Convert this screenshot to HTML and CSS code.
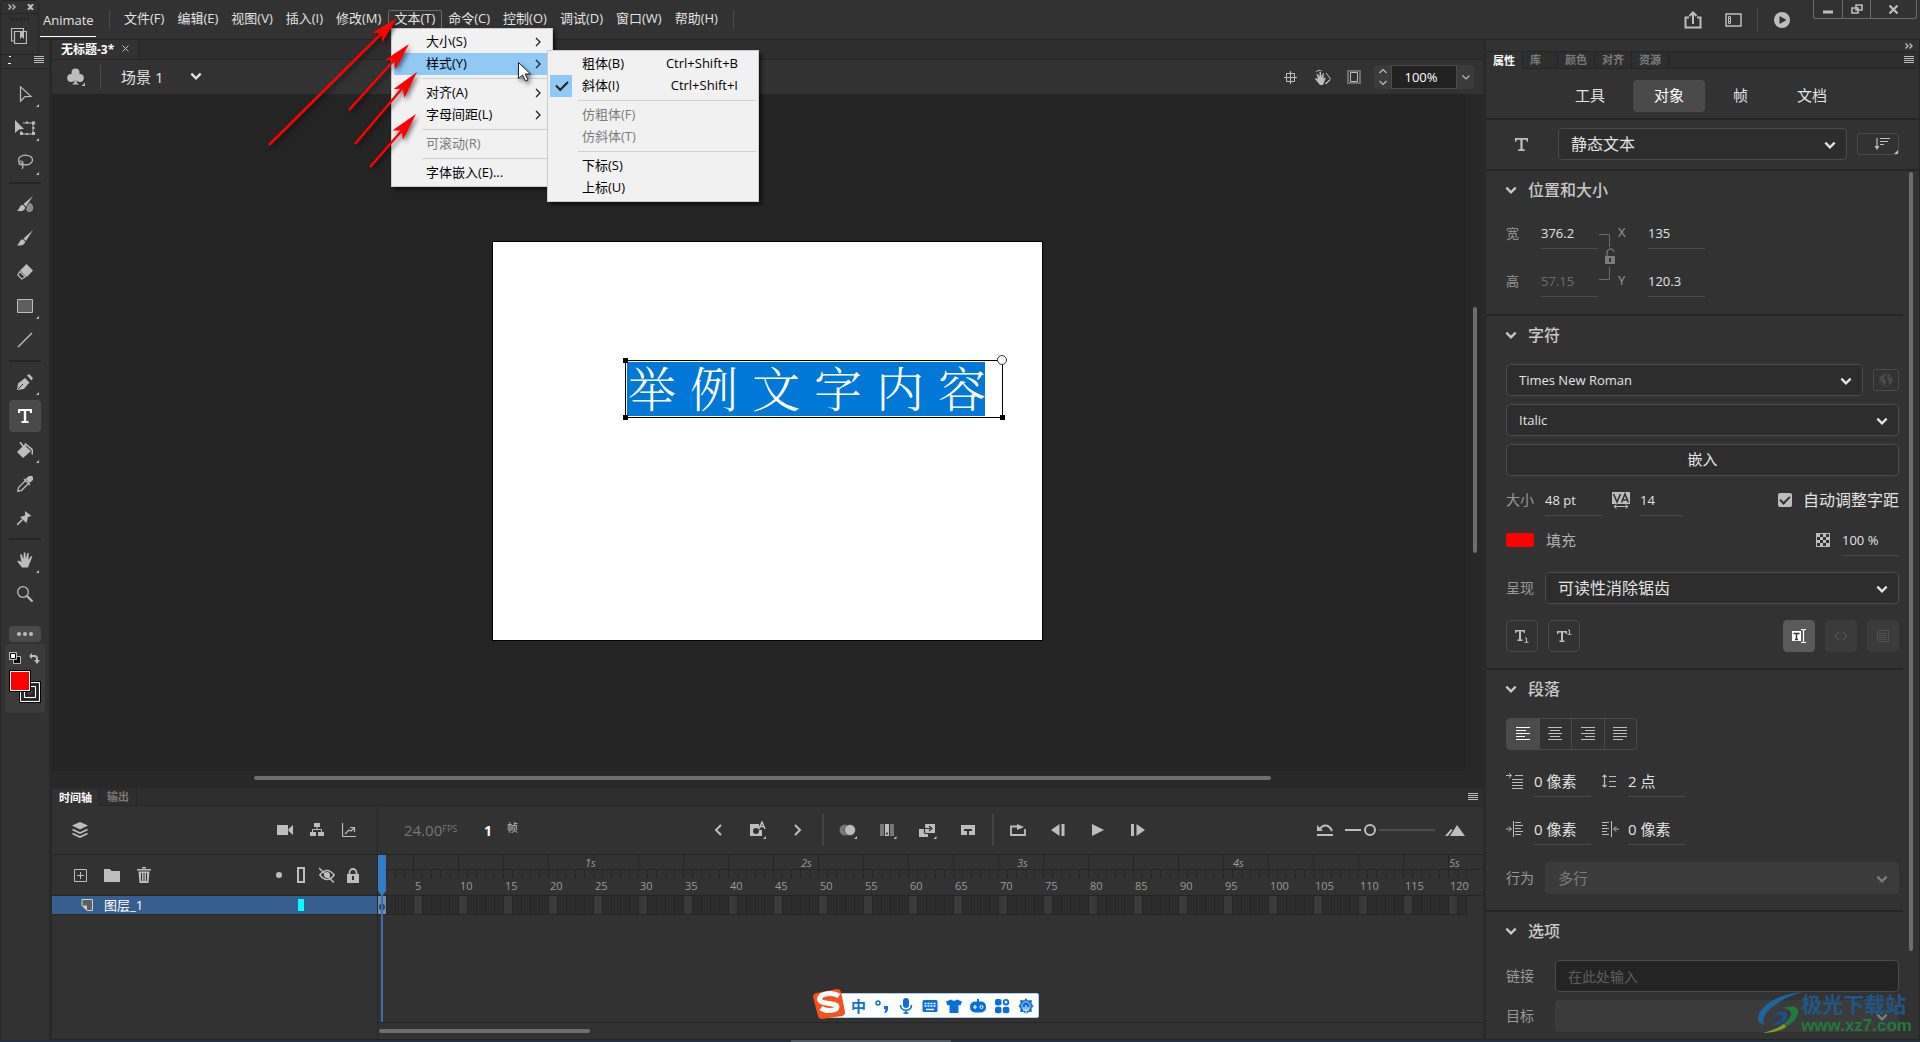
FILE: index.html
```html
<!DOCTYPE html>
<html lang="zh-CN">
<head>
<meta charset="utf-8">
<title>Animate</title>
<link rel="stylesheet" href="styles.css">
</head>
<body>
<svg class="defs" aria-hidden="true">
  <symbol id="chev" viewBox="0 0 12 12"><path d="M2 4l4 4 4-4" fill="none" stroke="currentColor" stroke-width="2"/></symbol>
  <symbol id="burger" viewBox="0 0 10 8"><path d="M0 .5h10M0 2.5h10M0 4.5h10M0 6.5h10" stroke="currentColor" fill="none"/></symbol>
  <symbol id="arrow-head" viewBox="0 0 8 12"><path d="M2 2l4 4-4 4" fill="none" stroke="#222" stroke-width="1.3"/></symbol>
  <symbol id="corner" viewBox="0 0 4 4"><path d="M4 0v4H0z" fill="currentColor"/></symbol>
</svg>

<div class="app">
  <header class="topbar">
    <div class="brand">Animate</div>
    <nav class="menubar" aria-label="主菜单">
      <button>文件(F)</button><button>编辑(E)</button><button>视图(V)</button><button>插入(I)</button><button>修改(M)</button><button class="open">文本(T)</button><button>命令(C)</button><button>控制(O)</button><button>调试(D)</button><button>窗口(W)</button><button>帮助(H)</button>
    </nav>
    <div class="top-actions">
      <button aria-label="共享"><svg width="18" height="18" viewBox="0 0 18 18"><path d="M5 6.500H1.500v10h15v-10H13M9 13V2M5.500 5L9 1.500 12.500 5" fill="none" stroke="currentColor" stroke-width="2"/></svg></button>
      <button aria-label="工作区"><svg width="17" height="14" viewBox="0 0 17 14"><path d="M1 1h15v12H1z" fill="none" stroke="currentColor" stroke-width="1.500"/><path d="M3.500 3.500h2v7h-2z" fill="none" stroke="currentColor"/><path d="M3 5.500h3M3 8.500h3" stroke="currentColor"/></svg></button>
      <i class="bar"></i>
      <button aria-label="测试影片"><svg width="16" height="16" viewBox="0 0 16 16"><circle cx="8" cy="8" r="8" fill="currentColor"/><path d="M5.500 4l7 4-7 4z" fill="#323232"/></svg></button>
    </div>
    <div class="window-buttons">
      <button aria-label="最小化"><svg width="10" height="10" viewBox="0 0 10 10"><path d="M0 8h10" stroke="currentColor" stroke-width="3"/></svg></button>
      <button aria-label="还原"><svg width="12" height="10" viewBox="0 0 12 10"><path d="M5 1h6v5H5z M1 4h6v5H1z" fill="none" stroke="currentColor" stroke-width="1.600"/></svg></button>
      <button aria-label="关闭"><svg width="11" height="9" viewBox="0 0 11 9"><path d="M1.500 .5l8 8M9.500 .5l-8 8" stroke="currentColor" stroke-width="2.200"/></svg></button>
    </div>
  </header>

  <div class="body">
    <aside class="toolbar">
      <div class="toolbar-head"><svg width="3" height="8" viewBox="0 0 3 8"><path d="M1 .5h2M0 7.500h3" stroke="#fff"/></svg><svg width="10" height="8"><use href="#burger"/></svg></div>
      <div class="tools">
        <button aria-label="选择"><svg class="ic" viewBox="0 0 16 16"><path d="M3.500 .8v14.400L8 10.600l6-.2z" fill="none" stroke="currentColor" stroke-width="1.200"/></svg><svg class="cn"><use href="#corner"/></svg></button>
        <button aria-label="任意变形"><svg class="ic wide" viewBox="0 0 20 16"><path d="M0 0v13l4-3.500L9 9z" fill="currentColor"/><path d="M8 3h10v11H6v-3" fill="none" stroke="currentColor"/><path d="M17 1.500h3v3h-3zM17 12h3v3h-3zM5 12h3v3H5zM11 1.500h2v2h-2zM11 13h2v2h-2zM17.500 7h2v2h-2z" fill="currentColor"/></svg><svg class="cn"><use href="#corner"/></svg></button>
        <button aria-label="套索"><svg class="ic" viewBox="0 0 16 16"><ellipse cx="8.500" cy="6" rx="7" ry="4.800" fill="none" stroke="currentColor" stroke-width="1.200"/><circle cx="4" cy="9" r="2" fill="#323232" stroke="currentColor" stroke-width="1.200"/><path d="M3 9c3 0 4 3 2 6" fill="none" stroke="currentColor" stroke-width="1.200"/></svg><svg class="cn"><use href="#corner"/></svg></button>
        <hr>
        <button aria-label="流畅画笔"><svg class="ic" viewBox="0 0 16 16"><path d="M16 0L6.500 8l2.500 2.500zM5.800 8.800c-3 0-3 4-5.800 6 4 1 8 0 8.300-3.600z" fill="currentColor"/><path d="M13 7c3 2.500 4 5 2 7.500-2 2-5 1-5.500-1 .7-1 1-2 .8-3z" fill="#8a8a8a" stroke="currentColor" stroke-width=".6"/></svg></button>
        <button aria-label="画笔"><svg class="ic" viewBox="0 0 16 16"><path d="M16 0L6.500 8.500 9 11zM5.800 9.200c-3 0-3 4-5.800 6 4 1 8 0 8.300-3.600z" fill="currentColor"/></svg></button>
        <button aria-label="橡皮擦"><svg class="ic" viewBox="0 0 16 16"><path d="M9.500 0L16 6.500 9.800 13 3 6.500z" fill="currentColor"/><path d="M2.700 7.600L.8 10.800l4 4.200 3.500-2z" fill="none" stroke="currentColor" stroke-width="1.200"/></svg></button>
        <button aria-label="矩形"><svg class="ic" viewBox="0 0 16 16"><path d="M.5 1.500h15v13H.5z" fill="#5e5e5e" stroke="currentColor"/></svg><svg class="cn"><use href="#corner"/></svg></button>
        <button aria-label="线条"><svg class="ic" viewBox="0 0 16 16"><path d="M1 15L15 1" stroke="currentColor" stroke-width="1.500"/></svg></button>
        <hr>
        <button aria-label="钢笔"><svg class="ic" viewBox="0 0 16 16"><path d="M0 16l1-6.500L8 4l4.500 4.500L6.800 15z" fill="currentColor"/><path d="M1 15l5-5" stroke="#323232"/><path d="M10 1.500l2-1.500 4 4-1.500 2.500z" fill="currentColor"/></svg><svg class="cn"><use href="#corner"/></svg></button>
        <button class="active" aria-label="文本"><svg class="ic" viewBox="0 0 16 16"><path d="M1 1h14v4h-2.200V3H9.200v10h2.300v2h-7v-2h2.300V3H3.200v2H1z" fill="currentColor"/></svg></button>
        <button aria-label="颜料桶"><svg class="ic" viewBox="0 0 16 16"><path d="M7 3l7 6-8 7-6-6z" fill="currentColor"/><path d="M3 0l3 4 3 1M7.500 4l1-2 5.500 4.500c2 1 1.500 4 1 6" fill="none" stroke="currentColor" stroke-width="1.600"/></svg><svg class="cn"><use href="#corner"/></svg></button>
        <button aria-label="滴管"><svg class="ic" viewBox="0 0 16 16"><path d="M12 0h3l1 1v3l-3.500 3-4-4z" fill="currentColor"/><path d="M9 4L1.500 11.500 .8 15.300l3.800-1L12 7" fill="none" stroke="currentColor" stroke-width="1.300"/><path d="M7 3l6 6" stroke="currentColor" stroke-width="1.500"/></svg></button>
        <button aria-label="资源变形"><svg class="ic" viewBox="0 0 16 16"><path d="M8 1l6.500 5-3.500 1-1.500 6-6.500-6 5-1.500z" fill="currentColor"/><path d="M5.500 9.500L0 15" stroke="currentColor" stroke-width="1.600"/></svg></button>
        <hr>
        <button aria-label="手形"><svg class="ic" viewBox="0 0 16 16"><path d="M5 15.500L.3 9.500l1.500-1L4.500 10 3 2.500l1.600-.3 1.800 5L6.800.5h1.600l.4 6.500 1.600-6 1.500.3-.6 6.700 2.700-4 1.300.8-2.800 6.700-1.500 4z" fill="currentColor"/></svg><svg class="cn"><use href="#corner"/></svg></button>
        <button aria-label="缩放"><svg class="ic" viewBox="0 0 16 16"><circle cx="6" cy="6" r="5.300" fill="none" stroke="currentColor" stroke-width="1.300"/><path d="M10 10l5.500 5.500" stroke="currentColor" stroke-width="2.200"/></svg></button>
      </div>
      <button class="more" aria-label="编辑工具栏"><svg width="16" height="4" viewBox="0 0 16 4"><circle cx="2" cy="2" r="2"/><circle cx="8" cy="2" r="2"/><circle cx="14" cy="2" r="2"/></svg></button>
      <div class="colors"><svg width="32" height="52" viewBox="0 0 32 52">
        <path d="M4.500 4.500h7v7h-7z" fill="#000" stroke="#bdbdbd"/><path d="M.5 .5h7v7h-7z" fill="#fff" stroke="#bdbdbd"/><path d="M1.500 1.500h5v5h-5z" fill="#fff" stroke="#000"/>
        <path d="M22 4h3.500q2.500 0 2.500 3v2" fill="none" stroke="#bdbdbd" stroke-width="2"/><path d="M23 1v6l-3-3zM25 8h6l-3 4z" fill="#bdbdbd"/>
        <path d="M11.500 30.500h19v19h-19z" fill="#3b3b3b" stroke="#fff"/><path d="M15.500 34.500h11v11h-11z" fill="none" stroke="#fff"/><path d="M13.500 32.500h15v15h-15zM17.500 36.500h7v7h-7z" fill="none" stroke="#222" stroke-width="2"/><path d="M10.500 29.500h21v21h-21z" fill="none" stroke="#000"/>
        <path d="M.5 18.500h21v21h-21z" fill="#f00" stroke="#000"/><path d="M1.500 19.500h19v19h-19z" fill="#f00" stroke="#fff"/></svg></div>
    </aside>

    <main class="center">
      <div class="doc-tabs"><button class="doc-tab">无标题-3*<svg width="7" height="7" viewBox="0 0 7 7"><path d="M.5 .5l6 6M6.500 .5l-6 6" stroke="#bdbdbd"/></svg></button></div>
      <div class="scenebar">
        <button class="club" aria-label="编辑场景"><svg width="18" height="18" viewBox="0 0 18 18"><circle cx="8.500" cy="4.500" r="4"/><circle cx="4.200" cy="10" r="4"/><circle cx="12.800" cy="10" r="4"/><path d="M8 8h1l.7 6.500 2.300 2H5l2.300-2z"/><path d="M18 14.500V18h-3.500z"/></svg></button>
        <i class="bar"></i>
        <button class="scene">场景 1 <svg width="14" height="14"><use href="#chev"/></svg></button>
        <div class="scene-right">
          <button aria-label="舞台居中"><svg width="13" height="13" viewBox="0 0 13 13"><path d="M6.500 0v13M0 6.500h13M2.500 2.500h8v8h-8z" fill="none" stroke="currentColor"/></svg></button>
          <button aria-label="旋转"><svg width="17" height="17" viewBox="0 0 17 17"><path d="M6 16L1 10l1-1 2 1-1.500-5h1.300L5.500 8V3h1.400l.6 5L9 4l1 .4-.6 5 1.600-1 .8.600-2.800 7z" fill="currentColor"/><path d="M12 4l4.500 6-5.500 5M2 3c2-2 4-2 6-1M12 15l4-4" fill="none" stroke="currentColor"/></svg></button>
          <button aria-label="裁切舞台外内容"><svg width="14" height="14" viewBox="0 0 14 14"><path d="M1 1h12v12H1z" fill="none" stroke="#6e6e6e" stroke-width="2"/><path d="M3.500 2.500h7v9h-7z" fill="none" stroke="currentColor"/></svg></button>
          <div class="zoombox">
            <button aria-label="步进"><svg width="8" height="18" viewBox="0 0 8 18"><path d="M.5 5L4 1.500 7.500 5M.5 13L4 16.500 7.500 13" fill="none" stroke="currentColor" stroke-width="1.200"/></svg></button>
            <input type="text" value="100%" aria-label="缩放比例">
            <button aria-label="缩放列表"><svg width="8" height="5" viewBox="0 0 8 5"><path d="M.5 .5L4 4 7.500 .5" fill="none" stroke="currentColor" stroke-width="1.200"/></svg></button>
          </div>
        </div>
      </div>

      <div class="stage">
        <div class="canvas">
          <div class="textfield"><span>举例文字内容</span><i class="h tl"></i><i class="h bl"></i><i class="h br"></i><i class="ring"></i></div>
        </div>
        <div class="vtrack"><div class="vthumb"></div></div>
        <div class="htrack"><div class="hthumb"></div></div>
      </div>

      <section class="timeline">
        <div class="panel-tabs tl-tabs"><button class="on">时间轴</button><button>输出</button><svg class="burger" width="10" height="8"><use href="#burger"/></svg></div>
        <div class="tl-grid">
          <div class="tl-left">
            <div class="tl-row1">
              <button aria-label="图层视图"><svg width="16" height="16" viewBox="0 0 16 16"><path d="M8 0l8 3.500L8 7.500 0 3.500z" fill="currentColor"/><path d="M.5 7.500L8 11l7.500-3.500M.5 11.500L8 15l7.500-3.500" fill="none" stroke="currentColor" stroke-width="1.800"/></svg></button>
              <span class="push"></span>
              <button aria-label="摄像头"><svg width="16" height="12" viewBox="0 0 16 12"><path d="M0 1h11v10H0zM11.500 5L16 1v10l-4.500-4z" fill="currentColor"/></svg></button>
              <button aria-label="父级视图"><svg width="14" height="14" viewBox="0 0 14 14"><path d="M4 0h6v4H4zM0 9h6v4H0zM8 9h6v4H8z" fill="currentColor"/><path d="M7 4v3M2.500 9V6.500h9V9" fill="none" stroke="currentColor"/></svg></button>
              <button aria-label="图层深度"><svg width="14" height="14" viewBox="0 0 14 14"><path d="M.5 0v13.500H14M3 11l4-4 2 1 3-3M8 4.500h4.500V9" fill="none" stroke="currentColor" stroke-width="1.200"/></svg></button>
            </div>
            <div class="tl-row2">
              <button aria-label="新建图层"><svg width="13" height="13" viewBox="0 0 13 13"><path d="M.5 .5h12v12H.5zM6.500 3v7M3 6.500h7" fill="none" stroke="currentColor"/></svg></button>
              <button aria-label="新建文件夹"><svg width="16" height="13" viewBox="0 0 16 13"><path d="M0 0h6l1.500 2H16v11H0z" fill="currentColor"/></svg></button>
              <button aria-label="删除"><svg width="14" height="16" viewBox="0 0 14 16"><path d="M0 2h14v1.500H0zM5 0h4v1.500H5zM1.500 4.500h11L11.500 16h-9z" fill="currentColor"/><path d="M4.500 6v8M7 6v8M9.500 6v8" stroke="#323232"/></svg></button>
              <span class="push"></span>
              <button class="s dot" aria-label="突出显示"><svg width="6" height="6"><circle cx="3" cy="3" r="3" fill="currentColor"/></svg></button>
              <button class="s" aria-label="轮廓"><svg width="8" height="16" viewBox="0 0 8 16"><path d="M1 1h6v14H1z" fill="none" stroke="currentColor" stroke-width="2"/></svg></button>
              <button class="s eye" aria-label="隐藏"><svg width="16" height="16" viewBox="0 0 16 16"><path d="M.8 8Q8-1 15.200 8 8 17 .8 8z" fill="none" stroke="currentColor" stroke-width="1.500"/><circle cx="8" cy="8" r="3" fill="currentColor"/><path d="M0 1l15 14.500" stroke="currentColor" stroke-width="1.500"/></svg></button>
              <button class="s" aria-label="锁定"><svg width="12" height="15" viewBox="0 0 12 15"><path d="M2.500 7V4.500a3.500 3.500 0 017 0V7" fill="none" stroke="currentColor" stroke-width="1.800"/><path d="M0 6h12v9H0z" fill="currentColor"/><path d="M6 8v4" stroke="#323232" stroke-width="2"/></svg></button>
            </div>
            <div class="layer"><svg width="12" height="12" viewBox="0 0 12 12"><path d="M1 .5h10.500v11H6L1 6.500z" fill="#5e5e5e" stroke="#cfcfcf"/><path d="M1 6.500h5v5z" fill="#cfcfcf"/></svg><span>图层_1</span><i></i></div>
          </div>
          <div class="tl-right">
            <div class="transport">
              <div class="info"><span class="fps">24.00<sup>FPS</sup></span><b>1</b><span class="unit">帧</span></div>
              <button aria-label="上一关键帧"><svg width="8" height="12" viewBox="0 0 8 12"><path d="M7 1L2 6l5 5" fill="none" stroke="currentColor" stroke-width="2"/></svg></button>
              <button aria-label="自动关键帧"><svg width="16" height="18" viewBox="0 0 16 18"><path d="M0 3h9v6h3v6H0z" fill="currentColor"/><circle cx="6" cy="10" r="3" fill="#323232"/><path d="M9 8l3-7 3 7M10 5.500h4" fill="none" stroke="currentColor" stroke-width="1.500"/><path d="M16 15v3h-3z" fill="currentColor"/></svg></button>
              <button aria-label="下一关键帧"><svg width="8" height="12" viewBox="0 0 8 12"><path d="M1 1l5 5-5 5" fill="none" stroke="currentColor" stroke-width="2"/></svg></button>
              <i class="bar2"></i>
              <button aria-label="绘图纸外观"><svg width="18" height="18" viewBox="0 0 18 18"><circle cx="6" cy="9" r="5.500" fill="#777"/><circle cx="11" cy="9" r="5.500" fill="currentColor" stroke="#323232" stroke-width=".6"/><path d="M18 15v3h-3z" fill="currentColor"/></svg></button>
              <button aria-label="编辑多个帧"><svg width="18" height="18" viewBox="0 0 18 18"><path d="M1 3h4v12H1zM11 3h4v12h-4z" fill="#777"/><path d="M6 3h4v12H6z" fill="currentColor"/><circle cx="8" cy="12.500" r="1" fill="#222"/><path d="M17.500 15v3h-3z" fill="currentColor"/></svg></button>
              <button aria-label="插入帧"><svg width="18" height="18" viewBox="0 0 18 18"><path d="M0 8h9v8H0zM6 3h10v9H6z" fill="currentColor"/><path d="M5.500 7.500h7M10 5l3 2.500-3 2.500M5.500 12.500h5M5.500 3v9" fill="none" stroke="#323232" stroke-width="1.200"/><path d="M17.500 15v3h-3z" fill="currentColor"/></svg></button>
              <button aria-label="补间"><svg width="14" height="10" viewBox="0 0 14 10"><path d="M0 0h14v10H0z" fill="currentColor"/><path d="M3 5h8M7 5v5" stroke="#323232" stroke-width="2"/></svg></button>
              <i class="bar2"></i>
              <button aria-label="循环"><svg width="16" height="12" viewBox="0 0 16 12"><path d="M8 2.500H1v8.500h14V5" fill="none" stroke="currentColor" stroke-width="1.800"/><path d="M7 0l7 3-7 3z" fill="currentColor"/></svg></button>
              <button aria-label="后退一帧"><svg width="14" height="12" viewBox="0 0 14 12"><path d="M8.500 0v12L0 6zM10.500 0h3v12h-3z" fill="currentColor"/></svg></button>
              <button aria-label="播放"><svg width="12" height="12" viewBox="0 0 12 12"><path d="M0 0l12 6-12 6z" fill="currentColor"/></svg></button>
              <button aria-label="前进一帧"><svg width="14" height="12" viewBox="0 0 14 12"><path d="M0 0h3v12H0zM5.500 0L14 6l-8.500 6z" fill="currentColor"/></svg></button>
              <span class="push"></span>
              <button aria-label="重置时间轴缩放"><svg width="16" height="12" viewBox="0 0 16 12"><path d="M0 11h16" stroke="currentColor" stroke-width="2"/><path d="M3 5c3-5 9-5 12 2" fill="none" stroke="currentColor" stroke-width="2"/><path d="M0 1v6h6z" fill="currentColor"/></svg></button>
              <input type="range" min="0" max="100" value="24" aria-label="时间轴缩放">
              <button aria-label="放大"><svg width="20" height="11" viewBox="0 0 20 11"><path d="M0 11l6-7 1.500 1L3 11zM5 11l7-11 8 11z" fill="currentColor"/></svg></button>
            </div>
            <div class="ruler">
              <div class="seconds"><span>1s</span><span>2s</span><span>3s</span><span>4s</span><span>5s</span></div>
              <div class="ticks"></div>
              <div class="nums"><span>5</span><span>10</span><span>15</span><span>20</span><span>25</span><span>30</span><span>35</span><span>40</span><span>45</span><span>50</span><span>55</span><span>60</span><span>65</span><span>70</span><span>75</span><span>80</span><span>85</span><span>90</span><span>95</span><span>100</span><span>105</span><span>110</span><span>115</span><span>120</span></div>
            </div>
            <div class="frames"></div>
            <div class="playhead"><i class="head"></i><i class="stem"></i><i class="cell"></i></div>
            <div class="tl-scroll"><div></div></div>
          </div>
        </div>
      </section>
    </main>

    <aside class="props">
      <div class="collapse"><svg width="8" height="6" viewBox="0 0 8 6"><path d="M.5 .5L3 3 .5 5.500M4.500 .5L7 3 4.500 5.500" fill="none" stroke="currentColor" stroke-width="1.400"/></svg></div>
      <div class="panel-tabs"><button class="on">属性</button><button class="lib">库</button><button>颜色</button><button>对齐</button><button>资源</button><svg class="burger" width="10" height="8"><use href="#burger"/></svg></div>
      <div class="modes"><button>工具</button><button class="on">对象</button><button>帧</button><button>文档</button></div>
      <div class="kind">
        <svg width="15" height="15" viewBox="0 0 16 16"><path d="M1 1h14v4h-1.500L13 3H9.200v10h2.300v2h-7v-2h2.300V3H3L2.500 5H1z" fill="currentColor"/></svg>
        <div class="sel"><select aria-label="文本类型"><option>静态文本</option></select><svg><use href="#chev"/></svg></div>
        <button class="mini" aria-label="文本方向"><svg width="28" height="20" viewBox="0 0 28 20"><path d="M7 4v10M10 4.500h10M10 7.500h8M10 10.500h4" stroke="currentColor" stroke-width="1.200"/><path d="M4.500 12h5L7 16zM28 16v4h-4z" fill="currentColor"/></svg></button>
      </div>

      <div class="scroll">
        <div class="sections">
          <section>
            <h2><svg><use href="#chev"/></svg>位置和大小</h2>
            <div class="pos">
              <label for="w">宽</label><input id="w" type="text" value="376.2">
              <svg class="link" width="20" height="48" viewBox="0 0 20 48"><path d="M1 1.500h10.500V14M11.500 34v12.500H1" fill="none" stroke="#6b6b6b"/><path d="M9 23v-3a3.500 3.500 0 017-1" fill="none" stroke="#7c7c7c" stroke-width="1.200"/><path d="M7 23h10v8H7z" fill="#7c7c7c"/><path d="M12 25v4" stroke="#323232" stroke-width="2"/></svg>
              <label for="x">X</label><input id="x" type="text" value="135">
              <label for="hh">高</label><input id="hh" type="text" value="57.15" disabled>
              <label for="y">Y</label><input id="y" type="text" value="120.3">
            </div>
          </section>
          <section>
            <h2><svg><use href="#chev"/></svg>字符</h2>
            <div class="stack">
              <div class="row"><div class="sel"><select class="lat" aria-label="字体"><option>Times New Roman</option></select><svg><use href="#chev"/></svg></div>
                <button class="mini globe" aria-label="添加 Web 字体"><svg width="14" height="14" viewBox="0 0 14 14"><circle cx="7" cy="7" r="6.300" fill="none" stroke="#4b4b4b" stroke-width=".8"/><path d="M1 4.500L4 1.500l2.500.5-.5 2-2 1.500 3 1.500.5 2-2.500 3.500-1.500-3L1 7.500zM9 1l2.500 1.500L10 4l2.500 2 .8 1.500-2 4L9.500 10 10 8 8 6.500l.5-2L8 3z" fill="#4b4b4b"/></svg></button></div>
              <div class="sel"><select class="lat" aria-label="字体样式"><option>Italic</option></select><svg><use href="#chev"/></svg></div>
              <button class="wide-btn">嵌入</button>
            </div>
            <div class="row size">
              <label for="fs">大小</label><input id="fs" type="text" value="48 pt">
              <svg class="va" width="18" height="17" viewBox="0 0 18 17"><path d="M0 0h18v12H0z" fill="#bdbdbd"/><path d="M1.500 2L5 10 8.500 2M9.500 10.500L13 2l3.500 8.500M11 8h4" fill="none" stroke="#323232" stroke-width="1.600"/><path d="M2 14.500h14M4.500 12.500l-2.500 2 2.500 2M13.500 12.500l2.500 2-2.500 2" fill="none" stroke="#bdbdbd"/></svg>
              <input class="narrow" type="text" value="14" aria-label="字母间距">
              <label class="check"><input type="checkbox" checked>自动调整字距</label>
            </div>
            <div class="row fill">
              <button class="swatch" id="fc" aria-label="填充颜色"></button><label for="fc">填充</label>
              <i class="checker"></i><input type="text" value="100 %" aria-label="不透明度">
            </div>
            <div class="row field"><label for="rd">呈现</label><div class="sel"><select id="rd"><option>可读性消除锯齿</option></select><svg><use href="#chev"/></svg></div></div>
            <div class="row btns">
              <button class="sq" aria-label="切换下标"><svg width="16" height="16" viewBox="0 0 16 16"><path d="M1 2h10v3H9.800l-.3-1.500H7v8h1.500V13h-5v-1.500H5v-8H2.500L2.200 5H1z" fill="#bdbdbd"/><path d="M11 10h1.500v4M10.500 14.300h4" fill="none" stroke="#bdbdbd"/></svg></button>
              <button class="sq" aria-label="切换上标"><svg width="16" height="16" viewBox="0 0 16 16"><path d="M1 3h10v3H9.800l-.3-1.500H7v8h1.500V14h-5v-1.500H5v-8H2.500L2.200 6H1z" fill="#bdbdbd"/><path d="M12 2h1.500v4M11.500 6.300h4" fill="none" stroke="#bdbdbd"/></svg></button>
              <span class="push"></span>
              <button class="sq lit" aria-label="可选"><svg width="16" height="16" viewBox="0 0 16 16"><path d="M1 3h9v10H1z" fill="#fff"/><path d="M2.500 5.500h6M5.500 5.500v6M4 11.500h3" stroke="#333" stroke-width="1.400"/><path d="M10 1.500h1.500l1 1 1-1H15M12.500 2v12M10 14.500h5" fill="none" stroke="#fff" stroke-width="1.200"/></svg></button>
              <button class="sq off" disabled aria-label="呈现为 HTML"><svg width="14" height="10" viewBox="0 0 14 10"><path d="M5 1L1.500 5 5 9M9 1l3.500 4L9 9" fill="none" stroke="currentColor" stroke-width="1.400"/></svg></button>
              <button class="sq off" disabled aria-label="显示边框"><svg width="12" height="12" viewBox="0 0 12 12"><path d="M.5 .5h11v11H.5zM2 3.500h8M2 5.500h8M2 7.500h8M2 9.500h8" fill="none" stroke="currentColor"/></svg></button>
            </div>
          </section>
          <section>
            <h2><svg><use href="#chev"/></svg>段落</h2>
            <div class="align">
              <button class="on" aria-label="左对齐"><svg viewBox="0 0 14 14"><path d="M0 .5h14M0 3.500h10M0 6.500h14M0 9.500h9M0 12.500h14"/></svg></button>
              <button aria-label="居中"><svg viewBox="0 0 14 14"><path d="M0 .5h14M2 3.500h10M0 6.500h14M2 9.500h10M0 12.500h14"/></svg></button>
              <button aria-label="右对齐"><svg viewBox="0 0 14 14"><path d="M0 .5h14M4 3.500h10M0 6.500h14M4 9.500h10M0 12.500h14"/></svg></button>
              <button aria-label="两端对齐"><svg viewBox="0 0 14 14"><path d="M0 .5h14M0 3.500h14M0 6.500h14M0 9.500h14M0 12.500h10"/></svg></button>
            </div>
            <div class="para">
              <svg width="17" height="16" viewBox="0 0 17 16"><path d="M0 2.500h5M9 2.500h8M6 6.500h11M6 9.500h11M6 12.500h11M6 15.500h11M3 0l2.500 2.500L3 5" fill="none" stroke="currentColor"/></svg><input type="text" value="0 像素" aria-label="缩进">
              <svg width="14" height="14" viewBox="0 0 14 14"><path d="M2.500 1v12M.5 3l2-2 2 2M.5 11l2 2 2-2M7 2.500h7M7 7.500h7M7 12.500h7" fill="none" stroke="currentColor" stroke-width="1.200"/></svg><input type="text" value="2 点" aria-label="行距">
              <svg width="17" height="16" viewBox="0 0 17 16"><path d="M0 8h5M3 5.500L5.500 8 3 10.500M7.500 0v16M9 1.500h6M9 4.500h8M9 7.500h6M9 10.500h8M9 13.500h6" fill="none" stroke="currentColor"/></svg><input type="text" value="0 像素" aria-label="左边距">
              <svg width="17" height="16" viewBox="0 0 17 16"><path d="M17 8h-5M14 5.500L11.500 8l2.500 2.500M9.500 0v16M0 1.500h7M0 4.500h5M0 7.500h7M0 10.500h5M0 13.500h7" fill="none" stroke="currentColor"/></svg><input type="text" value="0 像素" aria-label="右边距">
            </div>
            <div class="row field beh"><label for="bh">行为</label><div class="sel off"><select id="bh" disabled><option>多行</option></select><svg><use href="#chev"/></svg></div></div>
          </section>
          <section>
            <h2><svg><use href="#chev"/></svg>选项</h2>
            <div class="stack opts">
              <div class="row field"><label for="lk">链接</label><input class="box" id="lk" type="text" placeholder="在此处输入"></div>
              <div class="row field"><label for="tg">目标</label><div class="sel off"><select id="tg" disabled><option></option></select><svg><use href="#chev"/></svg></div></div>
            </div>
          </section>
        </div>
        <div class="ptrack"><div></div></div>
      </div>
    </aside>
  </div>
  <footer class="taskbar"><i></i></footer>
</div>

<div class="dock">
  <div class="dock-head"><svg width="8" height="6" viewBox="0 0 8 6"><path d="M.5 .5L3 3 .5 5.500M4.500 .5L7 3 4.500 5.500" fill="none" stroke="#bdbdbd" stroke-width="1.400"/></svg><svg width="7" height="6" viewBox="0 0 7 6"><path d="M1 0l5 6M6 0L1 6" stroke="#bdbdbd" stroke-width="2"/></svg></div>
  <i class="grip"></i>
  <button aria-label="库"><svg width="16" height="16" viewBox="0 0 16 16"><path d="M3.500 3.500h12v12h-12zM3 13H.5V.5h12V3" fill="none" stroke="#bdbdbd" stroke-width="1.200"/><path d="M9 3h4v8l-2-2-2 2z" fill="#bdbdbd"/></svg></button>
</div>

<div class="menu m1" role="menu">
  <button>大小(S)<svg><use href="#arrow-head"/></svg></button>
  <button class="hot">样式(Y)<svg><use href="#arrow-head"/></svg></button>
  <hr>
  <button>对齐(A)<svg><use href="#arrow-head"/></svg></button>
  <button>字母间距(L)<svg><use href="#arrow-head"/></svg></button>
  <hr>
  <button disabled>可滚动(R)</button>
  <hr>
  <button>字体嵌入(E)...</button>
</div>
<div class="menu m2" role="menu">
  <button>粗体(B)<span>Ctrl+Shift+B</span></button>
  <button class="ticked">斜体(I)<span>Ctrl+Shift+I</span></button>
  <hr>
  <button disabled>仿粗体(F)</button>
  <button disabled>仿斜体(T)</button>
  <hr>
  <button>下标(S)</button>
  <button>上标(U)</button>
</div>

<svg class="marks" width="560" height="190" viewBox="0 0 560 190">
  <g stroke="#f00" stroke-width="2.500" fill="#f00">
    <path d="M269 145L382 33M349 110l48-53M355 144l50-59M370 167l35-40"/>
    <g stroke="none">
      <path d="M0 0l-28-7 6 7-6 7z" transform="translate(397 18) rotate(-45)"/>
      <path d="M0 0l-28-7 6 7-6 7z" transform="translate(409 44) rotate(-48)"/>
      <path d="M0 0l-28-7 6 7-6 7z" transform="translate(417 72) rotate(-50)"/>
      <path d="M0 0l-28-7 6 7-6 7z" transform="translate(416 114) rotate(-49)"/>
    </g>
  </g>
  <path class="cursor" d="M518.500 62.500v16l4-3.500 3 6 2.500-1-2.800-6h5.300z" fill="#fff" stroke="#222"/>
</svg>

<div class="ime">
  <svg class="sogou" width="32" height="30" viewBox="0 0 32 30"><path d="M3 4L24 0q3 0 4 3l4 20q0 3-3 4L9 30q-3 0-4-3L0 8q0-3 3-4z" fill="#f4511e"/><path d="M26 7C20 3 7 4 6.500 10c0 6 18 3 17.500 8-.5 4-11 5-16 1" fill="none" stroke="#fff" stroke-width="5"/></svg>
  <b>中</b>
  <svg viewBox="0 0 16 16"><circle cx="4" cy="5" r="2" fill="none" stroke="currentColor" stroke-width="1.500"/><path d="M10 8h4v3c0 2-1.500 4-3.500 4l1-4H10z" fill="currentColor"/></svg>
  <svg viewBox="0 0 16 16"><rect x="5" y="0" width="6" height="10" rx="3" fill="currentColor"/><path d="M2.500 7c0 7 11 7 11 0M8 12v4M5.500 15h5" fill="none" stroke="currentColor" stroke-width="1.600"/></svg>
  <svg viewBox="0 0 16 16"><rect x=".5" y="2" width="15" height="12" rx="1.500" fill="currentColor"/><path d="M2.500 5.500h11M2.500 8h11" stroke="#fff" stroke-width="1.600" stroke-dasharray="2 1"/><path d="M4 11.500h8" stroke="#fff" stroke-width="1.500"/></svg>
  <svg viewBox="0 0 16 16"><path d="M5 1.500q3 2.500 6 0l5 2-1.500 4-2-.5v8h-9V7l-2 .5L0 3.500z" fill="currentColor"/></svg>
  <svg viewBox="0 0 16 16"><rect x="0" y="3.500" width="16" height="11" rx="5" fill="currentColor"/><path d="M8 1v3" stroke="currentColor" stroke-width="2"/><path d="M3 9h4M5 7v4" stroke="#fff" stroke-width="1.200"/><circle cx="11.500" cy="9" r="1.500" fill="none" stroke="#fff"/></svg>
  <svg viewBox="0 0 16 16"><rect x="1" y="1" width="6.500" height="6.500" rx="2" fill="currentColor"/><rect x="1" y="8.800" width="6.500" height="6.500" rx="2" fill="currentColor"/><rect x="8.800" y="8.800" width="6.500" height="6.500" rx="2" fill="currentColor"/><circle cx="12" cy="4.200" r="2.300" fill="none" stroke="currentColor" stroke-width="1.800"/></svg>
  <svg viewBox="0 0 16 16"><path d="M8 0l1.800 2.500 4-.5-.3 3.500L15.500 8l-2 2.500.3 3.500-3-.2L8 16l-2.800-2.200-3 .2.300-3.500L.5 8l2-2.500L2.200 2l4 .5z" fill="currentColor"/><circle cx="8" cy="8" r="4.200" fill="none" stroke="#fff" stroke-width=".7"/><path d="M8 7v9M6 9v4M10 9v4" stroke="#fff" stroke-width="1"/></svg>
</div>

<div class="watermark">
  <svg width="46" height="42" viewBox="0 0 46 42"><path d="M46 0C20 2 2 14 1 26c0 4 3 6 6 7C2 22 22 6 46 0z" fill="#1b659c"/><path d="M9 30c2 4 14 1 16-4 1-5-7-4-9 0 2-8 14-9 14-2S17 36 9 30z" fill="#1b4e8f"/><path d="M26 16c12-4 18 0 14 8-4 9-16 15-34 17 14-4 26-11 28-18 1-5-3-6-8-7z" fill="#1f7a3c"/><path d="M6 41c8-2 16-5 21-9l2 3c-6 4-14 6-23 6z" fill="#8a9a25"/></svg>
  <div><strong>极光下载站</strong><em>www.xz7.com</em></div>
</div>
</body>
</html>
```
FILE: styles.css
```css
* { box-sizing: border-box; }
:root {
  --bg: #323232;
  --line: #252525;
  --icon: #bdbdbd;
  --text: #e3e3e3;
  --edge: #4b4b4b;
}
body {
  margin: 0;
  height: 100vh;
  overflow: hidden;
  position: relative;
  background: #292929;
  color: var(--text);
  font-family: "Open Sans", "Noto Sans CJK SC", sans-serif;
  font-size: 13px;
}
button, input, select { font: inherit; color: inherit; }
button {
  display: flex;
  align-items: center;
  justify-content: center;
  border: 0;
  padding: 0;
  background: none;
}
svg { display: block; flex: none; }
i { display: block; flex: none; }
.defs { position: absolute; width: 0; height: 0; }
.push { flex: 1; }
.app { height: 100vh; display: flex; flex-direction: column; }

/* Top bar */
.topbar {
  flex: none;
  height: 40px;
  display: flex;
  background: var(--bg);
  border-bottom: 1px solid var(--line);
}
.brand {
  margin-left: 40px;
  width: 56px;
  height: 37px;
  padding: 10px 0 0 3px;
  line-height: 20px;
  border-bottom: 1px solid #fff;
}
.menubar {
  display: flex;
  height: 19px;
  margin: 10px 0 0 13px;
  padding: 0 8px;
  border-left: 1px solid #4b4b4b;
  border-right: 1px solid #4b4b4b;
}
.menubar button { padding: 0 7px 5px 6px; white-space: nowrap; border: 1px solid transparent; border-width: 1px 0 0; }
.menubar .open { padding: 0 6px 5px 5px; border: 1px solid #6a6a6a; border-bottom: 0; border-radius: 2px; }
.top-actions { margin-left: auto; display: flex; align-items: center; color: var(--icon); }
.top-actions button { width: 40px; height: 32px; }
.top-actions .bar { margin: 0 4px; }
.bar { width: 1px; height: 24px; background: var(--edge); }
.window-buttons {
  display: flex;
  height: 19px;
  margin: 0 3px 0 11px;
  color: var(--icon);
  border: 1px solid #6a6a6a;
  border-top: 0;
  border-radius: 0 0 3px 3px;
}
.window-buttons button { width: 28px; }
.window-buttons button + button { border-left: 1px solid #6a6a6a; }
.window-buttons button:last-child { width: 46px; }

.body { flex: 1; min-height: 0; display: flex; gap: 3px; }

/* Tools */
.toolbar {
  width: 49px;
  flex: none;
  display: flex;
  flex-direction: column;
  align-items: center;
  background: var(--bg);
  border-left: 1px solid var(--line);
  color: var(--icon);
}
.toolbar-head {
  align-self: stretch;
  height: 29px;
  padding: 11px 5px 0 7px;
  display: flex;
  justify-content: space-between;
  align-items: center;
  border-bottom: 1px solid var(--line);
}
.tools { display: flex; flex-direction: column; gap: 2px; padding-top: 9px; }
.tools button { position: relative; width: 32px; height: 32px; border-radius: 4px; }
.tools .active { background: #4a4a4a; color: #fff; }
.tools hr { width: 32px; height: 2px; margin: 2px 0; border: 0; background: var(--line); }
.ic { width: 16px; height: 16px; }
.ic.wide { width: 20px; }
.cn { position: absolute; right: 2px; bottom: 3px; width: 3px; height: 3px; }
.more { width: 32px; height: 16px; margin-top: 16px; border-radius: 4px; background: #4a4a4a; }
.more svg, .club svg { fill: var(--icon); }
.colors { width: 40px; height: 69px; margin-top: 2px; padding: 8px 4px; border-radius: 4px; background: #3b3b3b; }

/* Document area */
.center { flex: 1; min-width: 0; display: flex; flex-direction: column; }
.doc-tabs { height: 20px; flex: none; display: flex; background: #2e2e2e; border-bottom: 1px solid var(--line); }
.doc-tab { padding: 0 10px 2px 9px; gap: 8px; font-size: 12px; font-weight: 700; background: var(--bg); border-right: 1px solid var(--line); color: #fff; }
.scenebar { height: 34px; flex: none; display: flex; align-items: center; background: var(--bg); }
.club { width: 48px; }
.scene { gap: 22px; padding: 0 0 2px 20px; font-size: 15px; white-space: pre; }
.scene-right { margin-left: auto; display: flex; align-items: center; color: var(--icon); padding-right: 9px; }
.scene-right > button { width: 32px; height: 32px; }
.zoombox { display: flex; height: 24px; margin-left: 4px; border-radius: 3px; background: #3b3b3b; }
.zoombox button { width: 17px; }
.zoombox input { width: 66px; padding: 0 6px 0 0; text-align: center; color: #fff; background: #222; border: 1px solid var(--edge); }
.stage {
  flex: 1;
  min-height: 0;
  display: grid;
  grid-template: 1fr 16px / 1fr 17px;
  background: #242424;
  border-bottom: 2px solid #292929;
}
.canvas {
  grid-area: 1 / 1 / 3 / 3;
  place-self: center;
  position: relative;
  width: 551px;
  height: 400px;
  background: #fff;
  border: 1px solid #000;
}
.textfield { position: absolute; left: 132px; top: 118px; width: 378px; height: 58px; border: 1px solid #000; padding: 1px; }
.textfield span {
  display: block;
  width: 358px;
  height: 54px;
  padding-left: 1px;
  background: #0078d7;
  color: #fff;
  font: 300 48px/50px "Noto Serif CJK SC", "Noto Sans CJK SC", serif;
  letter-spacing: 14px;
  white-space: nowrap;
}
.h { position: absolute; width: 5px; height: 5px; background: #000; }
.tl { left: -3px; top: -3px; }
.bl { left: -3px; bottom: -3px; }
.br { right: -3px; bottom: -3px; }
.ring { position: absolute; right: -5px; top: -6px; width: 10px; height: 10px; border: 1px solid #333; border-radius: 50%; background: #fff; }
.vtrack { grid-area: 1 / 2; background: #282828; padding: 213px 6px 0 7px; z-index: 1; }
.vthumb { height: 246px; border-radius: 2px; background: #6e6e6e; }
.htrack { grid-area: 2 / 1 / 3 / 3; background: #282828; padding: 5px 212px 0 202px; }
.hthumb { height: 4px; border-radius: 2px; background: #6e6e6e; }

/* Panel tabs */
.panel-tabs { flex: none; display: flex; align-items: stretch; height: 17px; background: #2e2e2e; border-bottom: 1px solid var(--line); color: #7a7a7a; font-size: 11px; font-weight: 700; }
.panel-tabs button { padding: 0 7px; line-height: 16px; border-right: 1px solid var(--line); white-space: nowrap; }
.panel-tabs .on { background: var(--bg); color: #fff; margin-bottom: -1px; }
.panel-tabs .lib { padding-right: 16px; }
.burger { margin: auto 5px auto auto; color: var(--icon); }

/* Timeline */
.timeline { height: 251px; flex: none; display: flex; flex-direction: column; background: var(--bg); border-bottom: 1px solid var(--line); }
.tl-grid { flex: 1; display: grid; grid-template-columns: 326px 1fr; }
.tl-left { border-right: 1px solid var(--line); color: var(--icon); }
.tl-row1, .tl-row2, .transport { display: flex; align-items: center; border-bottom: 1px solid var(--line); }
.tl-row1, .transport { height: 49px; }
.tl-row2 { height: 41px; }
.tl-row1, .tl-row2 { padding: 0 12px; }
.tl-row1 button, .tl-row2 button { width: 32px; height: 32px; }
.tl-row2 .s { width: 25px; }
.tl-row2 .dot { width: 19px; }
.tl-row2 .eye { width: 27px; }
.layer { display: flex; align-items: center; height: 19px; padding: 0 73px 0 29px; background: #355f91; border-bottom: 1px solid var(--line); color: #fff; }
.layer span { margin-left: 11px; line-height: 16px; }
.layer i { margin-left: auto; width: 6px; height: 12px; background: #0ff; }
.tl-right { position: relative; min-width: 0; display: flex; flex-direction: column; }
.transport { color: var(--icon); padding-right: 8px; }
.transport button { width: 40px; height: 32px; }
.info { width: 320px; padding-left: 26px; display: flex; align-items: center; }
.fps { width: 80px; font-size: 15px; color: #767676; }
.fps sup { font-size: 9px; line-height: 0; vertical-align: 4px; }
.info b { width: 23px; font-size: 14px; color: #fff; }
.unit { font-size: 11px; padding-bottom: 6px; }
.bar2 { width: 2px; height: 32px; margin: 0 4px; background: #434343; }
.transport input {
  appearance: none;
  width: 90px;
  height: 12px;
  margin: 0;
  background: linear-gradient(to right, #bdbdbd 16px, transparent 16px 34px, #4d4d4d 34px) center / 100% 2px no-repeat;
}
.transport input::-webkit-slider-thumb { appearance: none; width: 12px; height: 12px; border: 2px solid #bdbdbd; border-radius: 50%; background: var(--bg); }
.ruler { height: 41px; border-bottom: 1px solid var(--line); color: #9a9a9a; font-size: 11px; overflow: hidden; }
.seconds {
  display: flex;
  height: 15px;
  padding-left: 207px;
  line-height: 15px;
  font-style: italic;
  border-bottom: 1px solid var(--line);
  background: repeating-linear-gradient(to right, transparent 0 35px, var(--line) 35px 36px, transparent 36px 45px);
}
.seconds span { flex: 0 0 216px; }
.seconds span:last-child { flex-basis: auto; }
.ticks { width: 1089px; max-width: 100%; height: 8px; background: repeating-linear-gradient(to right, transparent 0 8px, var(--line) 8px 9px); }
.nums { display: flex; padding-left: 37px; line-height: 15px; }
.nums span { flex: 0 0 45px; }
.frames {
  height: 19px;
  width: 1089px;
  max-width: 100%;
  border-bottom: 1px solid var(--line);
  background:
    repeating-linear-gradient(to right, transparent 0 8px, var(--line) 8px 9px),
    repeating-linear-gradient(to right, transparent 0 36px, #3a3a3a 36px 44px, transparent 44px 45px),
    #2c2c2c;
}
.playhead { position: absolute; left: 0; top: 49px; width: 8px; height: 167px; }
.head { height: 40px; background: #357cc8; clip-path: polygon(0 0, 100% 0, 100% 90%, 62% 100%, 38% 100%, 0 90%); }
.cell { position: absolute; left: 0; top: 41px; width: 8px; height: 18px; background: radial-gradient(circle at 4px 11px, #28517f 3px, transparent 3px), #7f9cc0; opacity: .85; }
.stem { position: absolute; z-index: 1; left: 3px; top: 40px; width: 2px; height: 127px; background: #3a6ea8; }
.tl-scroll { margin-top: auto; height: 17px; padding: 6px 0 0 1px; border-top: 1px solid var(--line); }
.tl-scroll div { width: 211px; height: 4px; border-radius: 2px; background: #6e6e6e; }

/* Properties */
.props { width: 434px; flex: none; display: flex; flex-direction: column; background: var(--bg); border-right: 1px solid var(--line); border-bottom: 1px solid var(--line); }
.collapse { flex: none; height: 12px; display: flex; align-items: center; justify-content: flex-end; padding-right: 6px; color: var(--icon); border-bottom: 1px solid var(--line); }
.modes { flex: none; height: 51px; padding: 11px 0 0 68px; display: flex; gap: 7px; border-bottom: 2px solid var(--line); font-size: 15px; }
.modes button { height: 32px; padding: 0 21px 4px; border-radius: 4px; }
.modes .on { background: #4a4a4a; color: #fff; }
.kind { flex: none; height: 51px; display: flex; align-items: center; padding: 0 20px 1px 28px; border-bottom: 2px solid var(--line); color: var(--icon); }
.kind .sel { margin: 0 10px 0 29px; }
.sel { position: relative; flex: 1; display: flex; color: var(--text); }
.sel select {
  appearance: none;
  width: 100%;
  height: 32px;
  padding: 0 36px 1px 12px;
  font-size: 16px;
  background: #2d2d2d;
  border: 1px solid var(--edge);
  border-radius: 4px;
}
.sel select.lat { font-size: 13px; }
.sel svg { position: absolute; right: 10px; top: 10px; width: 14px; height: 14px; pointer-events: none; }
.sel.off select { background: #3b3b3b; border-color: #3b3b3b; color: #7c7c7c; opacity: 1; font-size: 15px; }
.sel.off svg { color: #7c7c7c; }
.mini { width: 42px; height: 22px; border: 1px solid var(--edge); border-radius: 3px; justify-content: flex-end; align-items: flex-end; }
.globe { width: 26px; justify-content: center; align-items: center; }
.scroll { flex: 1; min-height: 0; display: flex; overflow: hidden; }
.sections { flex: 1; min-width: 0; }
.sections section { padding: 0 4px 16px 20px; border-bottom: 2px solid var(--line); }
.sections section:first-child { padding-bottom: 9px; }
.sections section:last-child { border-bottom: 0; }
.ptrack { width: 16px; padding: 1px 6px 0; flex: none; }
.ptrack div { height: 779px; border-radius: 2px; background: #6e6e6e; margin: 0; }
h2 { display: flex; align-items: center; gap: 10px; height: 38px; margin: 0; padding-bottom: 2px; font-size: 16px; font-weight: 500; color: #c8c8c8; }
h2 svg { width: 14px; height: 14px; margin: 2px 0 0 -2px; }
label { color: #999; font-size: 14px; padding-bottom: 2px; white-space: nowrap; }
.props input[type="text"] { width: 57px; height: 32px; padding: 0; border: 0; border-bottom: 1px solid var(--edge); background: none; font-size: 13px; }
.props input:disabled { color: #6e6e6e; }
.pos { display: grid; grid-template-columns: 35px 57px 20px 30px 57px; grid-auto-rows: 48px; align-items: center; }
.pos label { font-size: 13px; }
.link { grid-area: 1 / 3 / 3 / 4; }
.row { display: flex; align-items: center; }
.stack { display: flex; flex-direction: column; gap: 8px; padding-top: 10px; }
.stack > .row > .mini { margin-left: 10px; }
.wide-btn { height: 32px; padding-bottom: 3px; border: 1px solid var(--edge); border-radius: 4px; background: #2d2d2d; font-size: 15px; }
.size { height: 48px; }
.size > label:first-child, .field label { width: 39px; }
.va { margin: 0 10px; }
.props input.narrow { width: 43px; }
.check { margin-left: auto; display: flex; align-items: center; gap: 11px; font-size: 16px; color: var(--text); }
.check input { appearance: none; width: 14px; height: 14px; margin: 2px 0 0; border-radius: 2px; background: var(--icon); display: grid; place-items: center; }
.check input::before { content: ""; width: 8px; height: 4px; border: solid #323232; border-width: 0 0 2px 2px; transform: rotate(-45deg); margin-bottom: 3px; }
.fill { height: 32px; }
.swatch { width: 28px; height: 14px; border-radius: 2px; background: #f00; }
.fill label { margin-left: 12px; font-size: 15px; color: #b0b0b0; }
.checker { width: 14px; height: 14px; margin: 0 12px 0 auto; border: 1px solid var(--icon); background: repeating-conic-gradient(#323232 0 25%, var(--icon) 0 50%) 0 0 / 6px 6px; }
.fill + .field { margin-top: 16px; }
.btns { gap: 10px; margin-top: 16px; }
.sq { width: 32px; height: 32px; border: 1px solid var(--edge); border-radius: 4px; }
.sq.lit { background: #5a5a5a; border-color: #5a5a5a; }
.sq.off { background: #3b3b3b; border-color: #3b3b3b; color: #505050; }
.align { display: flex; width: 131px; height: 32px; margin-top: 10px; border: 1px solid var(--edge); border-radius: 4px; }
.align button { flex: 1; }
.align button + button { border-left: 1px solid var(--edge); }
.align .on { background: var(--edge); color: #fff; }
.align svg { width: 14px; height: 14px; stroke: currentColor; }
.align button:not(.on) { color: var(--icon); }
.para { display: grid; grid-template-columns: 28px 57px 37px 57px; grid-auto-rows: 48px; align-items: center; padding-top: 7px; color: var(--icon); }
.para svg:nth-of-type(even) { margin-left: 11px; }
.props .para input { font-size: 15px; color: var(--text); }
.beh { margin-top: 9px; }
.opts .field label { width: 49px; }
.props input.box { flex: 1; height: 32px; padding: 0 12px; border: 1px solid var(--edge); border-radius: 4px; background: #242424; font-size: 14px; }
.box::placeholder { color: #5e5e5e; }

.taskbar { height: 2px; flex: none; background: #20323f; padding-left: 791px; }
.taskbar i { width: 160px; height: 2px; background: #4b5a66; }

/* Floating library dock */
.dock { position: absolute; left: 0; top: 0; width: 39px; height: 55px; background: var(--bg); border: 1px solid var(--line); border-radius: 4px 4px 0 0; }
.dock-head { height: 13px; display: flex; justify-content: space-between; align-items: center; padding: 0 4px 0 7px; border-bottom: 1px solid var(--line); }
.grip { width: 20px; height: 4px; margin: 3px auto 0; background: repeating-linear-gradient(to right, #242424 0 1px, transparent 1px 2px); }
.dock button { margin: 7px auto 0 10px; }

/* Pop-up menus */
.menu { position: absolute; padding: 2px; color: #000; background: #f1f1f1; border: 1px solid #ccc; box-shadow: 3px 3px 3px rgba(0, 0, 0, .5); }
.menu button { width: 100%; height: 22px; justify-content: space-between; padding: 0 18px 3px 32px; white-space: nowrap; }
.menu svg { width: 8px; height: 12px; margin-top: 2px; }
.menu hr { height: 1px; margin: 3px 0 3px 28px; border: 0; background: #d0d0d0; }
.menu button:disabled { color: #7b7b7b; }
.m1 { left: 391px; top: 28px; width: 162px; }
.m1 button { padding-right: 8px; }
.m1 .hot { background: #90c8f6; }
.m2 { left: 547px; top: 50px; width: 212px; }
.ticked { position: relative; }
.ticked::before { content: ""; position: absolute; left: 0; top: 0; width: 22px; height: 22px; background: #90c8f6; }
.ticked::after { content: ""; position: absolute; left: 6px; top: 6px; width: 10px; height: 5px; border: solid #222; border-width: 0 0 2px 2px; transform: rotate(-45deg); }

.marks { position: absolute; left: 0; top: 0; pointer-events: none; filter: drop-shadow(2px 3px 2px rgba(0, 0, 0, .5)); }

/* Input method bar */
.ime { position: absolute; left: 819px; bottom: 24px; width: 220px; height: 25px; padding: 0 4px 0 31px; display: flex; align-items: center; justify-content: space-between; background: #fff; border: 1px solid #a9cdf0; border-radius: 2px; color: #0a6fd8; }
.ime svg { width: 16px; height: 16px; }
.ime b { font-size: 15px; line-height: 22px; }
.ime .sogou { position: absolute; left: -7px; top: -5px; width: 32px; height: 30px; }

.watermark { position: absolute; right: 8px; bottom: 6px; display: flex; }
.watermark svg { margin-right: -2px; }
.watermark strong { display: block; color: #1f5688; font-size: 21px; line-height: 24px; }
.watermark em { display: block; color: #1f7a3c; font: 700 17px/20px "Liberation Sans", sans-serif; }
```
